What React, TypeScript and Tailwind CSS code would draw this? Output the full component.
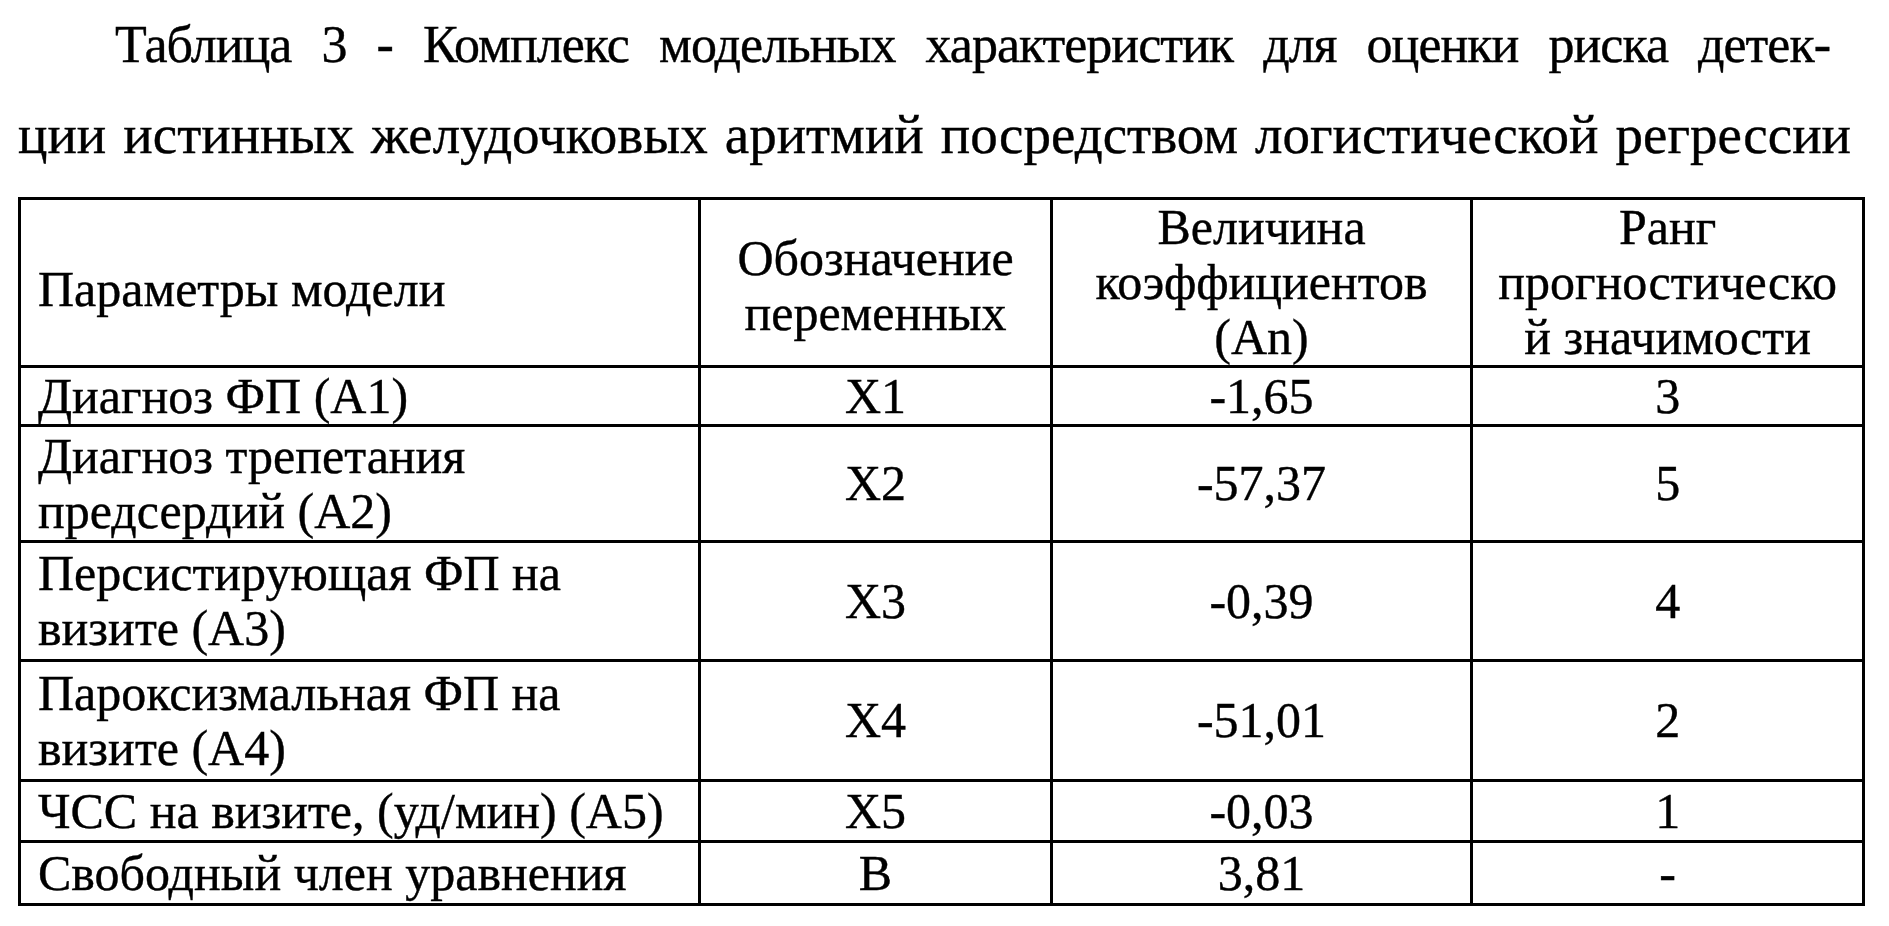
import React from "react";

const rows: { p: React.ReactNode; x: string; a: string; r: string; h: string }[] = [
  { p: "Диагноз ФП (А1)", x: "X1", a: "-1,65", r: "3", h: "h-[59px]" },
  { p: <>Диагноз трепетания<br />предсердий (А2)</>, x: "X2", a: "-57,37", r: "5", h: "h-[116px]" },
  { p: <>Персистирующая ФП на<br />визите (А3)</>, x: "X3", a: "-0,39", r: "4", h: "h-[119px]" },
  { p: <>Пароксизмальная ФП на<br />визите (А4)</>, x: "X4", a: "-51,01", r: "2", h: "h-[120px]" },
  { p: "ЧСС на визите, (уд/мин) (А5)", x: "X5", a: "-0,03", r: "1", h: "h-[61px]" },
  { p: "Свободный член уравнения", x: "B", a: "3,81", r: "-", h: "h-[63px]" },
];

const serif = '"Liberation Serif", "Times New Roman", serif';

export default function App() {
  return (
    <div className="w-[1889px] h-[926px] bg-white text-black overflow-hidden pl-[18px] pr-[24px] [font-family:Liberation_Serif,serif] [-webkit-text-stroke:0.4px_black]" style={{ fontFamily: serif }}>
      <div className="text-[55px] leading-[90px]" style={{ fontFamily: serif }}>
        <div className="pl-[97px] pr-[35px] text-[52px] tracking-[-1px] text-justify [text-align-last:justify]">Таблица 3 - Комплекс модельных характеристик для оценки риска детек-</div>
        <div className="pr-[14px] text-justify [text-align-last:justify]">ции истинных желудочковых аритмий посредством логистической регрессии</div>
      </div>
      <table className="mt-[17px] w-[1847px] border-collapse text-[50px] leading-[55px]" style={{ fontFamily: serif }}>
        <colgroup>
          <col className="w-[682px]" />
          <col className="w-[352px]" />
          <col className="w-[421px]" />
          <col className="w-[392px]" />
        </colgroup>
        <thead>
          <tr className="h-[165px]">
            <th className="border-[3px] border-black font-normal text-left align-middle pl-[17px] pt-[14px]">Параметры модели</th>
            <th className="border-[3px] border-black font-normal text-center align-middle pt-[6px]">Обозначение<br />переменных</th>
            <th className="border-[3px] border-black font-normal text-center align-middle">Величина<br />коэффициентов<br />(An)</th>
            <th className="border-[3px] border-black font-normal text-center align-middle">Ранг<br />прогностическо<br />й значимости</th>
          </tr>
        </thead>
        <tbody>
          {rows.map((r, i) => (
            <tr key={i} className={r.h}>
              <td className="border-[3px] border-black text-left align-middle pl-[17px] p-0">{r.p}</td>
              <td className="border-[3px] border-black text-center align-middle p-0">{r.x}</td>
              <td className="border-[3px] border-black text-center align-middle p-0">{r.a}</td>
              <td className="border-[3px] border-black text-center align-middle p-0">{r.r}</td>
            </tr>
          ))}
        </tbody>
      </table>
    </div>
  );
}
